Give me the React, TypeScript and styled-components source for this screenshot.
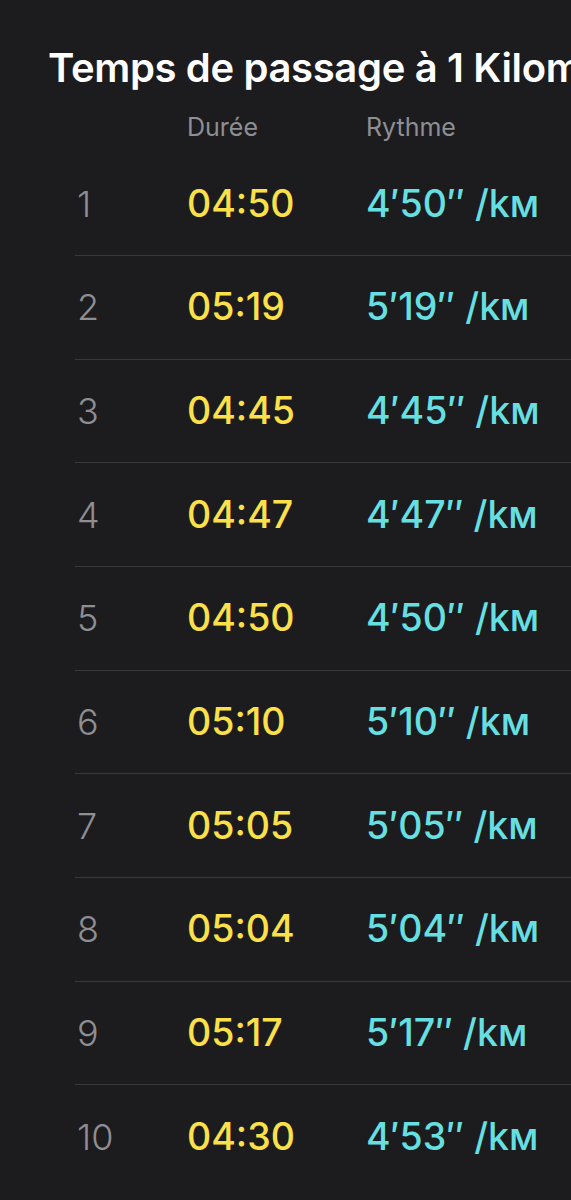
import React from "react";
import styled, { createGlobalStyle } from "styled-components";

const Global = createGlobalStyle`
  html, body {
    margin: 0;
    padding: 0;
    background: #1c1c1e;
  }
  body {
    font-family: Inter, "Noto Sans", "Liberation Sans", sans-serif;
    overflow: hidden;
  }
`;

const Page = styled.div`
  width: 571px;
  min-height: 1200px;
  background: #1c1c1e;
  overflow: hidden;
`;

const Title = styled.h1`
  margin: 44px 0 0 0;
  padding-left: 48px;
  font-size: 40px;
  line-height: 48px;
  font-weight: 600;
  letter-spacing: -0.35px;
  color: #ffffff;
  white-space: nowrap;
  overflow: hidden;
`;

const Grid = styled.div`
  display: grid;
  grid-template-columns: 112px 179px 1fr;
  margin-left: 75px;
  align-items: center;
`;

const Header = styled(Grid)`
  margin-top: 21px;
  height: 39.3px;
  align-items: start;
`;

const HeaderCell = styled.div`
  font-size: 25px;
  line-height: 28px;
  color: #8e8e93;
  font-weight: 400;
`;

const Row = styled(Grid)<{ $last?: boolean }>`
  box-sizing: border-box;
  height: 103.7px;
  border-bottom: ${(p) => (p.$last ? "none" : "1px solid #38383a")};
`;

const Index = styled.div`
  padding-left: 2px;
  font-size: 36px;
  line-height: 44px;
  font-weight: 300;
  color: #8e8e93;
`;

const Duration = styled.div`
  font-size: 37.5px;
  line-height: 44px;
  font-weight: 450;
  color: #fbe04a;
`;

const Pace = styled.div`
  font-size: 37.5px;
  line-height: 44px;
  font-weight: 450;
  color: #66dfe1;
  white-space: nowrap;
`;

const Unit = styled.span`
  font-variant-caps: small-caps;
`;

const data: [string, string][] = [
  ["04:50", "4′50″"],
  ["05:19", "5′19″"],
  ["04:45", "4′45″"],
  ["04:47", "4′47″"],
  ["04:50", "4′50″"],
  ["05:10", "5′10″"],
  ["05:05", "5′05″"],
  ["05:04", "5′04″"],
  ["05:17", "5′17″"],
  ["04:30", "4′53″"],
];

export default function App() {
  return (
    <Page>
      <Global />
      <Title>Temps de passage à 1 Kilomètre</Title>
      <Header>
        <span />
        <HeaderCell>Durée</HeaderCell>
        <HeaderCell>Rythme</HeaderCell>
      </Header>
      {data.map(([d, p], i) => (
        <Row key={i} $last={i === data.length - 1}>
          <Index>{i + 1}</Index>
          <Duration>{d}</Duration>
          <Pace>
            {p} <Unit>/km</Unit>
          </Pace>
        </Row>
      ))}
    </Page>
  );
}
